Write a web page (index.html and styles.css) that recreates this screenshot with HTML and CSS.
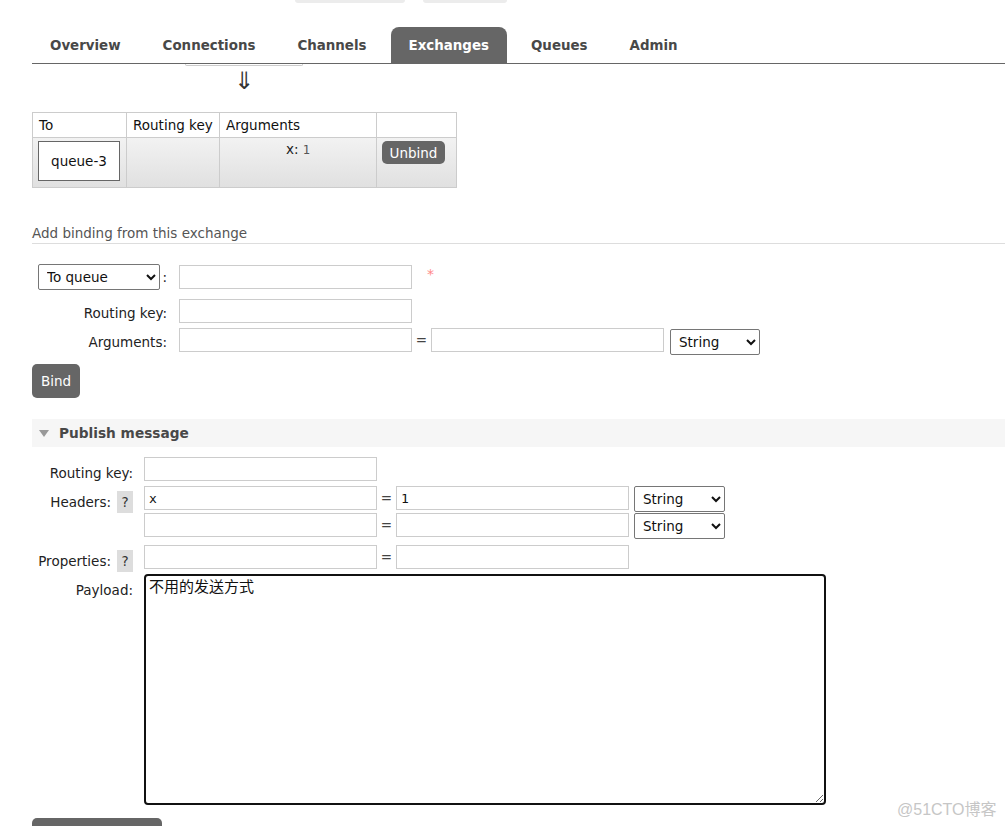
FILE: index.html
```html
<!DOCTYPE html>
<html>
<head>
<meta charset="utf-8">
<title>Exchange</title>
<link rel="stylesheet" href="styles.css">
</head>
<body>
<div class="page">
  <div class="topghost"><span class="ghost g1"></span><span class="ghost g2"></span></div>
  <nav class="tabs">
    <a class="tab">Overview</a>
    <a class="tab">Connections</a>
    <a class="tab">Channels</a>
    <a class="tab active">Exchanges</a>
    <a class="tab">Queues</a>
    <a class="tab">Admin</a>
  </nav>
  <div class="ghostbox"></div>
  <div class="arrow">⇓</div>

  <table class="bindings">
    <colgroup><col class="c1"><col class="c2"><col class="c3"><col class="c4"></colgroup>
    <thead>
      <tr><th>To</th><th>Routing key</th><th>Arguments</th><th></th></tr>
    </thead>
    <tbody>
      <tr>
        <td><span class="qbox">queue-3</span></td>
        <td></td>
        <td class="args"><span class="akey">x:</span> <span class="aval">1</span></td>
        <td><button class="btn unbind">Unbind</button></td>
      </tr>
    </tbody>
  </table>

  <h3 class="subhead">Add binding from this exchange</h3>

  <div class="bindform">
    <div class="brow r1">
      <div class="blabel first"><select class="sel sel-to"><option>To queue</option></select><span class="colon">:</span></div>
      <input class="inp" type="text">
      <span class="mand">*</span>
    </div>
    <div class="brow r2">
      <div class="blabel">Routing key:</div>
      <input class="inp" type="text">
    </div>
    <div class="brow r3">
      <div class="blabel">Arguments:</div>
      <input class="inp" type="text">
      <span class="eq">=</span>
      <input class="inp" type="text">
      <select class="sel sel-type"><option>String</option></select>
    </div>
  </div>
  <button class="btn bind">Bind</button>

  <div class="section-head"><span class="tri"></span>Publish message</div>

  <div class="pubform">
    <div class="prow">
      <div class="plabel">Routing key:</div>
      <div class="pfields"><div class="pline"><input class="inp" type="text"></div></div>
    </div>
    <div class="prow">
      <div class="plabel">Headers: <span class="help">?</span></div>
      <div class="pfields">
        <div class="pline"><input class="inp" type="text" value="x"><span class="eq">=</span><input class="inp" type="text" value="1"><select class="sel sel-type2"><option>String</option></select></div>
        <div class="pline second"><input class="inp" type="text"><span class="eq">=</span><input class="inp" type="text"><select class="sel sel-type2"><option>String</option></select></div>
      </div>
    </div>
    <div class="prow props">
      <div class="plabel">Properties: <span class="help">?</span></div>
      <div class="pfields"><div class="pline"><input class="inp" type="text"><span class="eq">=</span><input class="inp" type="text"></div></div>
    </div>
    <div class="prow payload">
      <div class="plabel">Payload:</div>
      <div class="pfields"><textarea class="payload-text">不用的发送方式</textarea></div>
    </div>
  </div>
  <button class="btn publish"><span class="publish-label">Publish message</span></button>
</div>
<div class="watermark">@51CTO博客</div>
</body>
</html>
```

FILE: styles.css
```css
html, body {
  margin: 0;
  padding: 0;
  overflow: hidden;
  height: 826px;
  background: #fff;
}
body {
  font-family: "DejaVu Sans", Verdana, sans-serif;
  font-size: 13.5px;
  color: #222;
  position: relative;
}
.page {
  padding-left: 32px;
}

/* faded elements at very top */
.topghost {
  display: flex;
  height: 3px;
}
.ghost {
  display: block;
  height: 3px;
  background: #ececec;
  border-radius: 0 0 4px 4px;
}
.g1 { margin-left: 263px; width: 110px; }
.g2 { margin-left: 18px; width: 84px; }

/* tabs */
.tabs {
  display: flex;
  gap: 6px;
  margin-top: 24px;
  height: 36px;
  border-bottom: 1px solid #666;
}
.tab {
  display: block;
  padding: 0 18px;
  line-height: 37px;
  font-weight: bold;
  font-size: 13.4px;
  color: #484848;
  border-radius: 8px 8px 0 0;
}
.tab.active {
  background: #666;
  color: #fff;
}

.ghostbox {
  margin-left: 153px;
  width: 116px;
  height: 1px;
  border: 1px solid #ccc;
  border-top: none;
  border-radius: 0 0 5px 5px;
}
.arrow {
  margin-left: 196px;
  width: 32px;
  margin-top: 3px;
  text-align: center;
  font-size: 24px;
  line-height: 24px;
  height: 24px;
  color: #333;
}

/* bindings table */
.bindings {
  margin-top: 19px;
  border-collapse: collapse;
  table-layout: fixed;
  width: 425px;
}
.bindings col.c1 { width: 94px; }
.bindings col.c2 { width: 93px; }
.bindings col.c3 { width: 157px; }
.bindings col.c4 { width: 80px; }
.bindings th, .bindings td {
  border: 1px solid #ccc;
  text-align: left;
  font-weight: normal;
  padding: 0 6px;
}
.bindings thead th {
  height: 23px;
  line-height: 23px;
  color: #111;
  padding: 1px 6px 0 6px;
  vertical-align: middle;
}
.bindings tbody tr {
  background: linear-gradient(#f2f2f2, #e0e0e0);
}
.bindings tbody td {
  height: 43px;
  vertical-align: top;
  padding: 3px 5px;
}
.qbox {
  display: block;
  width: 80px;
  height: 38px;
  line-height: 38px;
  border: 1px solid #666;
  background: #fff;
  text-align: center;
  color: #111;
}
.bindings td.args {
  text-align: center;
  padding-top: 3px;
  line-height: 16px;
}
.akey { color: #222; }
.aval { font-family: "DejaVu Sans Mono", monospace; font-size: 12px; color: #555; }

.btn {
  font-family: "DejaVu Sans", Verdana, sans-serif;
  font-size: 13.5px;
  color: #fff;
  background: #666;
  border: none;
  border-radius: 5px;
  cursor: pointer;
}
.unbind {
  width: 63px;
  height: 23px;
  padding: 0;
  display: block;
}

.subhead {
  margin: 37px 0 0 0;
  font-size: 13.5px;
  font-weight: normal;
  color: #555;
  line-height: 16px;
  padding-bottom: 2px;
  border-bottom: 1px solid #ddd;
}

/* bind form */
.bindform {
  margin-top: 20px;
}
.brow {
  display: flex;
  align-items: flex-start;
}
.brow.r1 { align-items: center; margin-bottom: 9px; }
.brow.r2 { margin-bottom: 5px; }
.blabel {
  width: 135px;
  padding-right: 3px;
  margin-right: 9px;
  text-align: right;
  padding-top: 6px;
  line-height: 16px;
  color: #222;
}
.blabel.first {
  padding-top: 0;
  display: flex;
  align-items: center;
  text-align: left;
}
.sel {
  font-family: "DejaVu Sans", Verdana, sans-serif;
  font-size: 13.5px;
  color: #111;
  border: 1px solid #767676;
  border-radius: 2px;
  background: #fff;
  height: 26px;
  padding: 0 4px;
}
.sel-to {
  margin-left: 6px;
  width: 123px;
}
.colon {
  margin-left: 2px;
}
.inp {
  box-sizing: border-box;
  width: 233px;
  height: 24px;
  border: 1px solid #ccc;
  border-radius: 0;
  padding: 0 4px;
  font-family: "DejaVu Sans Mono", monospace;
  font-size: 13px;
  color: #111;
  background: #fff;
  outline: none;
}
.mand {
  color: #f88;
  margin-left: 15px;
  margin-top: -6px;
  font-size: 14px;
}
.eq {
  width: 19px;
  text-align: center;
  line-height: 24px;
  color: #444;
  flex: none;
}
.sel-type {
  margin-left: 6px;
  margin-top: 1px;
  width: 90px;
}
.bind {
  display: block;
  margin-top: 9px;
  width: 48px;
  height: 34px;
  padding: 0;
}

/* publish section */
.section-head {
  margin-top: 21px;
  height: 28px;
  line-height: 28px;
  background: #f6f6f6;
  font-weight: bold;
  font-size: 13.7px;
  color: #484848;
  display: flex;
  align-items: center;
  padding-left: 7px;
}
.tri {
  width: 0;
  height: 0;
  border-left: 5.5px solid transparent;
  border-right: 5.5px solid transparent;
  border-top: 7px solid #999;
  margin-right: 10px;
}

.pubform {
  margin-top: 10px;
}
.prow {
  display: flex;
  align-items: flex-start;
  margin-bottom: 5px;
}
.prow.props { margin-top: 8px; }
.plabel {
  width: 101px;
  padding-right: 3px;
  margin-right: 8px;
  padding-top: 5px;
  margin-bottom: -3px;
  line-height: 22px;
  text-align: right;
  color: #222;
  display: flex;
  justify-content: flex-end;
  align-items: center;
  gap: 6px;
  flex: none;
  white-space: nowrap;
}
.help {
  display: inline-block;
  width: 16px;
  height: 22px;
  line-height: 22px;
  background: #ddd;
  text-align: center;
  color: #333;
}
.pfields {
  display: flex;
  flex-direction: column;
}
.pline {
  display: flex;
  align-items: flex-start;
  height: 24px;
}
.pline.second { margin-top: 3px; }
.sel-type2 {
  margin-left: 5px;
  width: 91px;
}
.payload-text {
  display: block;
  box-sizing: border-box;
  width: 682px;
  height: 231px;
  border: 2px solid #111;
  border-radius: 4px;
  padding: 0 3px;
  font-family: "Noto Sans CJK SC", sans-serif;
  font-size: 15px;
  line-height: 20px;
  color: #111;
  resize: both;
  outline: none;
}
.publish {
  display: block;
  margin-top: 13px;
  width: 130px;
  height: 34px;
  padding: 0;
}

.watermark {
  position: absolute;
  left: 897px;
  top: 796px;
  font-family: "Liberation Sans", "Noto Sans CJK SC", sans-serif;
  font-size: 16px;
  color: #c6c6c6;
  white-space: nowrap;
}
```
